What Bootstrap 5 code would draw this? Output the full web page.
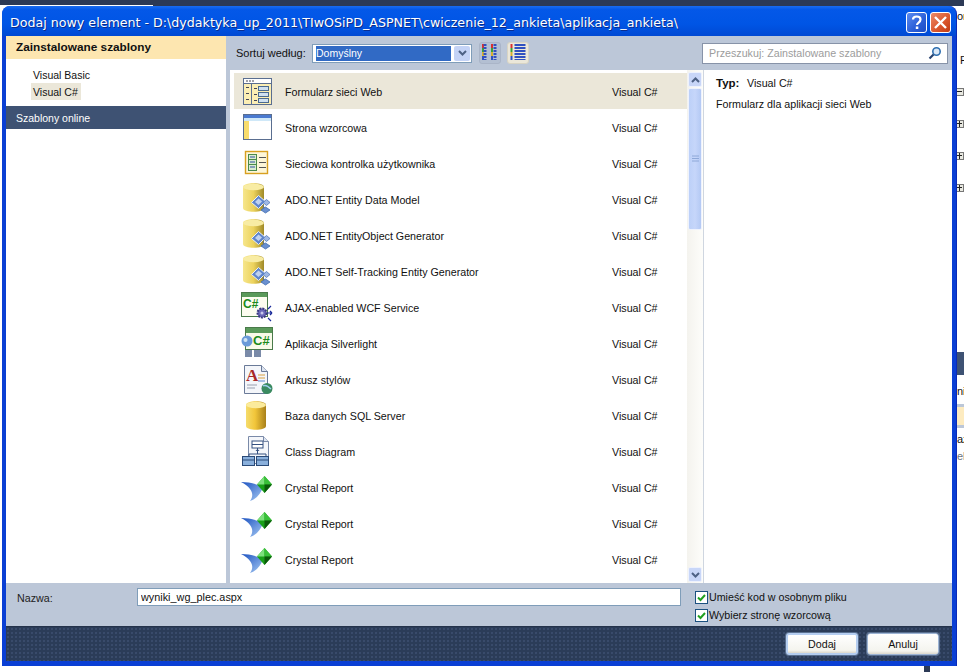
<!DOCTYPE html>
<html lang="pl">
<head>
<meta charset="UTF-8">
<title>Dodaj nowy element</title>
<link href="https://cdn.jsdelivr.net/npm/bootstrap@5.3.0/dist/css/bootstrap.min.css" rel="stylesheet">
<style>
html, body { height: 100%; }
body { width: 964px; height: 672px; overflow: hidden; background: #fff; position: relative; font: 10.7px/13px "Liberation Sans", Arial, sans-serif; color: #111; }
/* pulpit za oknem */
.top-strip { position: absolute; left: 0; top: 0; width: 964px; height: 6px; background: #2c3a56; }
.top-white { position: absolute; left: 0; top: 5px; width: 153px; height: 2px; background: #fff; }
.side-strip { position: absolute; left: 957px; top: 6px; width: 7px; height: 659px; background: #fff; overflow: hidden; white-space: nowrap; }
.side-txt { position: absolute; left: 3px; font-size: 11px; }
.side-txt.tight { left: 0; }
.side-head { position: absolute; left: 0; top: 346px; width: 7px; height: 23px; background: #3e5273; }
.side-band { position: absolute; left: 0; top: 398px; width: 7px; height: 24px; background: #fdebc0; border-top: 3px solid #bcc7d8; border-bottom: 3px solid #bcc7d8; }
.side-exp { position: absolute; left: 0; width: 7px; height: 8px; border: 1px solid #777; border-left: 0; background: linear-gradient(#222, #222) 0 2px / 5px 1px no-repeat, #e8e8e0; }
.side-exp.plus { background: linear-gradient(#222, #222) 0 2px / 5px 1px no-repeat, linear-gradient(#222, #222) 2px 0 / 1px 6px no-repeat, #e8e8e0; }
.bottom-dark { position: absolute; left: 924px; top: 665px; width: 6px; height: 7px; background: #2c3a56; }

/* okno */
.dlg { position: absolute; left: 2px; top: 6px; width: 955px; height: 660px; background: #0a3fd4; border-radius: 8px 8px 0 0; padding: 0 4px 4px; border-right: 1px solid #0a2ab8; display: flex; flex-direction: column; }
.dlg-title { height: 30px; margin: 0 -4px; padding: 3px 5px 0 8px; border-radius: 8px 8px 0 0; background: linear-gradient(#1a6cf0 0, #0458e8 12%, #0055e5 60%, #0049d3 100%); color: #fff; font: 12.65px/20px "DejaVu Sans", Verdana, sans-serif; display: flex; align-items: center; justify-content: space-between; text-shadow: 1px 1px 0 #0a2c8c; }
.title-text { white-space: nowrap; }
.cap-btn { width: 21px; height: 21px; border: 1px solid #fff; border-radius: 3px; display: block; margin-left: 3px; }
.cap-btn svg { display: block; }
.cap-help { background: linear-gradient(135deg, #5c8cf0, #2a5ed8 60%, #1c4cc4); }
.cap-close { background: linear-gradient(135deg, #ec8a68, #d9552c 60%, #bf3a14); }

.dlg-main { height: 547px; background: #bcc7d8; display: flex; }
.left-pane { width: 220px; background: #fff; flex: none; }
.left-head { height: 23px; line-height: 22px; background: #fde6b0; padding-left: 10px; font-weight: 700; font-size: 11.8px; }
.left-tree { padding: 7px 0 6px 25px; height: 47px; }
.tree-item { display: block; padding: 0 2px; height: 17px; line-height: 19px; width: 50px; white-space: nowrap; font-size: 10.5px; }
.tree-item.on { background: #ebe7d9; }
.left-online { height: 23px; line-height: 25px; background: #3e5273; color: #fff; padding-left: 10px; font-size: 10.5px; }

.mid-pane { flex: 1; display: flex; flex-direction: column; min-width: 0; }
.tool-row { height: 34px; display: flex; align-items: center; padding: 0 4px 0 10px; }
.sort-lbl { width: 76px; flex: none; font-size: 11px; }
.sort-select { width: 160px; height: 19px; background: #fff; border: 1px solid #7f9db9; padding: 1px 1px 1px 3px; display: flex; gap: 3px; color: #fff; }
.sort-val { flex: 1; background: #316ac5; line-height: 15px; font-size: 10.5px; }
.sort-arrow { width: 16px; background: #c4d3f6; border-radius: 2px; display: flex; align-items: center; justify-content: center; }
.view-btn { width: 22px; height: 22px; border-radius: 3px; margin-left: 6px; background: #b3bfd2; border: 1px solid #aab5c8; display: flex; align-items: center; justify-content: center; }
.view-btn.first { margin-left: 7px; }
.view-btn.on { background: #ebe7d9; border-color: #d8d4c4; }
.search-box { width: 246px; height: 21px; margin-left: auto; background: #fff; border: 1px solid #8793a8; border-radius: 0; display: flex; align-items: center; justify-content: space-between; color: #9c9c9c; padding: 0 5px 0 6px; }

.body-row { flex: 1; display: flex; min-height: 0; }
.items { width: 457px; margin-left: 4px; background: #fff; padding: 3px 0 0 4px; flex: none; overflow: hidden; border-radius: 0; }
.item-row { height: 36px; padding: 0; border: 0; border-radius: 0 !important; display: flex; align-items: center; background: transparent; color: #111; font-size: 10.7px; }
.item-row.active { background: #ebe7d9; color: #111; margin-top: 0; }
.item-row span { padding-top: 2px; }
.item-ico { width: 32px; height: 32px; margin-left: 7px; flex: none; }
.item-name { margin-left: 12px; width: 327px; flex: none; white-space: nowrap; }

.vscroll { width: 17px; background: linear-gradient(90deg, #f4f3ee, #fdfdfa); flex: none; padding: 2px 1px 1px; display: flex; flex-direction: column; border-right: 1px solid #cfd6e0; }
.sb-btn { height: 15px; flex: none; background: #c8d6f8; border: 1px solid #eef2fd; border-radius: 2px; display: flex; align-items: center; justify-content: center; }
.sb-thumb { height: 142px; margin-top: 1px; background: linear-gradient(90deg, #bcd0f8, #c6d6fa 50%, #b4c9f4); border: 1px solid #eef2fd; border-radius: 2px; display: flex; align-items: center; justify-content: center; }
.sb-space { flex: 1; }
.detail { flex: 1; background: #fff; padding: 6px 0 0 12px; }
.detail-type { display: flex; height: 17px; line-height: 14px; }
.detail-type b { width: 31px; font-size: 11.5px; }
.detail-desc { margin-top: 5px; }

.name-band { height: 43px; background: #bcc7d8; display: flex; padding: 5px 0 0 11px; }
.name-lbl { width: 120px; line-height: 20px; flex: none; color: #222; }
.name-input { width: 544px; height: 18px; flex: none; font: 10.85px/16px "Liberation Sans", Arial, sans-serif; color: #111; border: 1px solid #7f9db9; border-radius: 0; padding: 0 3px; }
.opts { margin-left: 14px; }
.opt { display: flex; align-items: center; height: 18px; margin: 0; padding: 0; min-height: 0; gap: 1px; }
.opt .form-check-input { width: 13px; height: 13px; margin: 0; float: none; border: 1px solid #1c5180; border-radius: 0; background-color: #fff; background-image: url("data:image/svg+xml,%3csvg xmlns='http://www.w3.org/2000/svg' viewBox='0 0 13 13'%3e%3cpath d='M3 6.500l2.500 2.500 4.500-5' fill='none' stroke='%2321a121' stroke-width='2'/%3e%3c/svg%3e"); background-size: 13px 13px; opacity: 1; }
.opt .form-check-label { opacity: 1; color: #111; font-size: 10.7px; line-height: 14px; }

.foot { height: 35px; display: flex; justify-content: flex-end; align-items: flex-start; gap: 9px; padding: 6px 13px 0 0; background-color: #2b3c58; background-image: radial-gradient(#3a4c6c 0.7px, transparent 0.8px); background-size: 4px 4px; border-top: 1px solid #24324b; }
.foot-btn { width: 72px; height: 22px; padding: 0; font: 10.7px/19px "Liberation Sans", Arial, sans-serif; color: #111; border: 1px solid #9db4d4; border-radius: 3px; background: linear-gradient(#fff, #f4f4ee 85%, #dcd8cc); box-shadow: 0 0 0 1px #5a7090; }
.foot-btn.def { border: 2px solid #b4cdf0; line-height: 18px; }
</style>
</head>
<body>

<svg width="0" height="0" style="position:absolute">
  <defs>
    <linearGradient id="gold" x1="0" x2="1" y1="0" y2="0"><stop offset="0" stop-color="#f5dc6c"/><stop offset=".45" stop-color="#f2c63a"/><stop offset="1" stop-color="#a8801a"/></linearGradient>
    <linearGradient id="goldpale" x1="0" x2="1" y1="0" y2="0"><stop offset="0" stop-color="#f6e68c"/><stop offset=".5" stop-color="#ecd25c"/><stop offset="1" stop-color="#a08a28"/></linearGradient>
    <linearGradient id="swoosh" x1="0" x2="1" y1="0" y2="1"><stop offset="0" stop-color="#1a50c0"/><stop offset="1" stop-color="#a8ccf4"/></linearGradient>
    <symbol id="i-form" viewBox="0 0 32 32">
      <rect x="2.500" y="3.500" width="28" height="26" fill="#fbeeb4" stroke="#5a6e90"/>
      <rect x="3" y="4" width="27" height="4" fill="#fff"/>
      <path d="M5 6h2M8 6h2M11 6h2" stroke="#445"/>
      <path d="M10.500 9v20M3 8.500h27" stroke="#5a6e90"/>
      <path d="M5 12.500h3M5 18.500h3M5 24.500h3M13 13.500h3M13 19.500h3M13 25.500h3" stroke="#445"/>
      <rect x="17.500" y="11.500" width="10" height="4" fill="#cfe0f0" stroke="#4a6a90"/>
      <rect x="17.500" y="17.500" width="10" height="4" fill="#cfe0f0" stroke="#4a6a90"/>
      <rect x="17.500" y="23.500" width="10" height="4" fill="#cfe0f0" stroke="#4a6a90"/>
    </symbol>
    <symbol id="i-master" viewBox="0 0 32 32">
      <rect x="2.500" y="3.500" width="28" height="25" fill="#fff" stroke="#5a6e90"/>
      <rect x="3" y="4" width="27" height="3" fill="#4a7ad0"/>
      <rect x="3" y="7" width="27" height="3" fill="#cfe8f8"/>
      <rect x="3" y="10" width="5" height="18" fill="#f8dc6c"/>
    </symbol>
    <symbol id="i-user" viewBox="0 0 32 32">
      <rect x="4.500" y="4.500" width="22" height="22" fill="#fdf6d8" stroke="#d8a020" stroke-width="1.400"/>
      <rect x="7.500" y="7.500" width="8" height="16" fill="#d8ecd0" stroke="#4a8a4a"/>
      <path d="M8 12.500h7M8 17.500h7" stroke="#4a8a4a"/>
      <path d="M9 10h5M9 15h5M9 20h5" stroke="#3050a0"/>
      <path d="M18 10.500h7M18 15.500h7M18 20.500h7" stroke="#555"/>
    </symbol>
    <symbol id="i-dbdiag" viewBox="0 0 32 32">
      <path d="M2 4c0-5 21-5 21 0v21c0 5-21 5-21 0z" fill="url(#goldpale)"/>
      <ellipse cx="12.500" cy="4" rx="10.500" ry="3.200" fill="#f8eca4"/>
      <path d="M10.500 19.500l7-7 7 6-7 7z" fill="#5f86cc" stroke="#e8eef8"/>
      <path d="M14 19l3.500-3.500 3.500 3-3.500 3.500z" fill="#c0d2f0"/>
      <path d="M22 22l1.500 4" stroke="#5a6e90"/>
      <path d="M22 19.500l3.500-3 3.500 3-3.500 3z" fill="#9fb8e4" stroke="#5078b8" stroke-width=".8"/>
      <path d="M20 27l4.500-3 4.500 3-4.500 3z" fill="#6a90d0" stroke="#3f6cb0" stroke-width=".8"/>
    </symbol>
    <symbol id="i-ajax" viewBox="0 0 32 32">
      <rect x="0.500" y="1.500" width="26" height="24" fill="#fdfdf0" stroke="#4a7a4a"/>
      <rect x="1" y="2" width="25" height="4" fill="#5a9a5a"/>
      <text x="2" y="17" font-family="Liberation Sans, sans-serif" font-size="12" font-weight="700" fill="#1a8a1a">C#</text>
      <circle cx="21" cy="22" r="4.500" fill="#6a68b8" stroke="#3a3a80" stroke-width="2" stroke-dasharray="2 1"/>
      <circle cx="21" cy="22" r="1.500" fill="#c8c8ec"/>
      <path d="M26 22h5M31 22l-2-2M31 22l-2 2M27 18l3-3M27 27l3 3" stroke="#1a2a9a" stroke-width="1.200" fill="none"/>
    </symbol>
    <symbol id="i-silver" viewBox="0 0 32 32">
      <rect x="4.500" y="0.500" width="27" height="22" fill="#f8fae8" stroke="#4a7a4a"/>
      <rect x="5" y="1" width="26" height="5" fill="#5a9a5a"/>
      <rect x="4" y="23" width="7" height="7" fill="#7a8aa8"/><rect x="13" y="23" width="7" height="7" fill="#7a8aa8"/>
      <text x="12" y="18" font-family="Liberation Sans, sans-serif" font-size="13" font-weight="700" fill="#1a8a1a">C#</text>
      <circle cx="6" cy="14" r="5.500" fill="#6a9ad8"/>
      <circle cx="4.500" cy="13" r="2" fill="#d0e4f4"/>
    </symbol>
    <symbol id="i-css" viewBox="0 0 32 32">
      <path d="M3.500 2.500h17l6 6v22h-23z" fill="#f4f6fa" stroke="#6a7a98"/>
      <path d="M20.500 2.500v6h6" fill="#dde4f0" stroke="#6a7a98"/>
      <text x="5" y="18" font-family="Liberation Serif, serif" font-size="17" font-weight="700" fill="#a82828">A</text>
      <path d="M17 12h7M17 15h7" stroke="#d8a040"/><path d="M17 18h7" stroke="#5a8ad0"/><path d="M6 22h10M6 25h8" stroke="#98a0b0"/>
      <circle cx="26" cy="25.500" r="5.500" fill="#3a8a60"/><path d="M22 23c3-2 6 1 8 3" stroke="#a0d0f0" fill="none" stroke-width="1.500"/>
    </symbol>
    <symbol id="i-db" viewBox="0 0 32 32">
      <path d="M5 6c0-5 20-5 20 0v21c0 5-20 5-20 0z" fill="url(#gold)"/>
      <ellipse cx="15" cy="6" rx="10" ry="3.200" fill="#fbeb9c"/>
    </symbol>
    <symbol id="i-class" viewBox="0 0 32 32">
      <path d="M7.500 1.500h15l5 5v22h-20z" fill="#f4f6fa" stroke="#7a8aa8"/>
      <path d="M22.500 1.500v5h5" fill="#dde4f0" stroke="#7a8aa8"/>
      <rect x="11" y="6" width="11" height="7" fill="#fff" stroke="#345080"/><path d="M11 9.500h11" stroke="#345080"/>
      <path d="M16.500 13v6M8 21v-2h17v2" stroke="#345080" fill="none"/>
      <path d="M14.500 16l2-2 2 2z" fill="#345080"/>
      <rect x="1.500" y="21.500" width="12" height="9" fill="#8ab0dc" stroke="#2a4a78"/><path d="M2 25h11" stroke="#2a4a78"/>
      <rect x="15.500" y="21.500" width="12" height="9" fill="#8ab0dc" stroke="#2a4a78"/><path d="M16 25h11" stroke="#2a4a78"/>
    </symbol>
    <symbol id="i-crystal" viewBox="0 0 32 32">
      <path d="M0 11c8 0 16 2 22 5-2 7-7 12-13 14 3-4 3-8 0-12-2-3-5-5-9-7z" fill="url(#swoosh)"/>
      <path d="M23.500 5l7.500 8.500-7.500 8.500-7.500-8.500z" fill="#18a018"/>
      <path d="M23.500 5l-7.500 8.500h7.500z" fill="#7ce07c"/>
      <path d="M23.500 5l7.500 8.500h-7.500z" fill="#38c038"/>
      <path d="M23.500 22l7.500-8.500h-7.500z" fill="#0a5a0a"/>
    </symbol>
    <symbol id="i-chev-d" viewBox="0 0 9 6"><path d="M1 1l3.500 3.500L8 1" fill="none" stroke="#4d6185" stroke-width="2"/></symbol>
    <symbol id="i-chev-u" viewBox="0 0 9 6"><path d="M1 5l3.500-3.500L8 5" fill="none" stroke="#4d6185" stroke-width="2"/></symbol>
    <symbol id="i-dots" viewBox="0 0 2 18">
      <path d="M1 0v4" stroke="#d83030" stroke-width="2"/><path d="M1 4v4" stroke="#3aa03a" stroke-width="2"/><path d="M1 8v4" stroke="#d8b030" stroke-width="2"/><path d="M1 12v4" stroke="#3050c0" stroke-width="2"/>
    </symbol>
  </defs>
</svg>

<div class="top-strip"></div>
<div class="top-white"></div>
<div class="side-strip">
  <span class="side-txt tight" style="top:4px">or</span>
  <span class="side-txt" style="top:48px">F</span>
  <div class="side-exp" style="top:82px"></div>
  <div class="side-exp plus" style="top:114px"></div>
  <div class="side-exp plus" style="top:146px"></div>
  <div class="side-exp plus" style="top:178px"></div>
  <div class="side-head"></div>
  <span class="side-txt tight" style="top:379px">ni</span>
  <div class="side-band"></div>
  <span class="side-txt tight" style="top:427px">az</span>
  <span class="side-txt tight text-secondary" style="top:444px">el</span>
</div>
<div class="bottom-dark"></div>

<div class="dlg">
  <div class="dlg-title">
    <span class="title-text">Dodaj nowy element - D:\dydaktyka_up_2011\TIwOSiPD_ASPNET\cwiczenie_12_ankieta\aplikacja_ankieta\</span>
    <span class="d-flex">
      <span class="cap-btn cap-help">
        <svg width="19" height="19" viewBox="0 0 19 19"><path d="M6 6.500c0-4 7.500-4 7.500 0 0 3-3.500 3-3.500 5.500" fill="none" stroke="#fff" stroke-width="2.200"/><rect x="8.800" y="13.500" width="2.500" height="2.500" fill="#fff"/></svg>
      </span>
      <span class="cap-btn cap-close">
        <svg width="19" height="19" viewBox="0 0 19 19"><path d="M4 4l11 11M15 4L4 15" stroke="#fff" stroke-width="2.400"/></svg>
      </span>
    </span>
  </div>

  <div class="dlg-main">
    <div class="left-pane">
      <div class="left-head">Zainstalowane szablony</div>
      <div class="left-tree">
        <span class="tree-item">Visual Basic</span>
        <span class="tree-item on">Visual C#</span>
      </div>
      <div class="left-online">Szablony online</div>
    </div>

    <div class="mid-pane">
      <div class="tool-row">
        <span class="sort-lbl">Sortuj według:</span>
        <div class="sort-select">
          <span class="sort-val">Domyślny</span>
          <span class="sort-arrow"><svg width="9" height="6"><use href="#i-chev-d"/></svg></span>
        </div>
        <span class="view-btn first">
          <svg width="17" height="18" viewBox="0 0 17 18">
            <use href="#i-dots" x="0" width="2" height="18"/><path d="M3 0v16" stroke="#3050c0" stroke-width="3" stroke-dasharray="2 1"/>
            <use href="#i-dots" x="9" width="2" height="18"/><path d="M13 0v16" stroke="#3050c0" stroke-width="3" stroke-dasharray="2 1"/>
          </svg>
        </span>
        <span class="view-btn on">
          <svg width="17" height="18" viewBox="0 0 17 18">
            <use href="#i-dots" x="0" width="3" height="18"/><path d="M10 0v16" stroke="#3050c0" stroke-width="11" stroke-dasharray="2 1"/>
          </svg>
        </span>
        <div class="search-box">
          <span>Przeszukuj: Zainstalowane szablony</span>
          <svg width="14" height="14" viewBox="0 0 14 14"><circle cx="8.500" cy="5.500" r="3.700" fill="#dbe8f6" stroke="#2f6fb0" stroke-width="1.600"/><path d="M5.500 8.500L1.500 12.500" stroke="#25406e" stroke-width="2.200"/></svg>
        </div>
      </div>

      <div class="body-row">
        <div class="items list-group">
          <div class="list-group-item item-row active"><svg class="item-ico"><use href="#i-form"/></svg><span class="item-name">Formularz sieci Web</span><span>Visual C#</span></div>
          <div class="list-group-item item-row"><svg class="item-ico"><use href="#i-master"/></svg><span class="item-name">Strona wzorcowa</span><span>Visual C#</span></div>
          <div class="list-group-item item-row"><svg class="item-ico"><use href="#i-user"/></svg><span class="item-name">Sieciowa kontrolka użytkownika</span><span>Visual C#</span></div>
          <div class="list-group-item item-row"><svg class="item-ico"><use href="#i-dbdiag"/></svg><span class="item-name">ADO.NET Entity Data Model</span><span>Visual C#</span></div>
          <div class="list-group-item item-row"><svg class="item-ico"><use href="#i-dbdiag"/></svg><span class="item-name">ADO.NET EntityObject Generator</span><span>Visual C#</span></div>
          <div class="list-group-item item-row"><svg class="item-ico"><use href="#i-dbdiag"/></svg><span class="item-name">ADO.NET Self-Tracking Entity Generator</span><span>Visual C#</span></div>
          <div class="list-group-item item-row"><svg class="item-ico"><use href="#i-ajax"/></svg><span class="item-name">AJAX-enabled WCF Service</span><span>Visual C#</span></div>
          <div class="list-group-item item-row"><svg class="item-ico"><use href="#i-silver"/></svg><span class="item-name">Aplikacja Silverlight</span><span>Visual C#</span></div>
          <div class="list-group-item item-row"><svg class="item-ico"><use href="#i-css"/></svg><span class="item-name">Arkusz stylów</span><span>Visual C#</span></div>
          <div class="list-group-item item-row"><svg class="item-ico"><use href="#i-db"/></svg><span class="item-name">Baza danych SQL Server</span><span>Visual C#</span></div>
          <div class="list-group-item item-row"><svg class="item-ico"><use href="#i-class"/></svg><span class="item-name">Class Diagram</span><span>Visual C#</span></div>
          <div class="list-group-item item-row"><svg class="item-ico"><use href="#i-crystal"/></svg><span class="item-name">Crystal Report</span><span>Visual C#</span></div>
          <div class="list-group-item item-row"><svg class="item-ico"><use href="#i-crystal"/></svg><span class="item-name">Crystal Report</span><span>Visual C#</span></div>
          <div class="list-group-item item-row"><svg class="item-ico"><use href="#i-crystal"/></svg><span class="item-name">Crystal Report</span><span>Visual C#</span></div>
        </div>
        <div class="vscroll">
          <span class="sb-btn"><svg width="9" height="6"><use href="#i-chev-u"/></svg></span>
          <span class="sb-thumb"><svg width="7" height="8"><path d="M0 1h7M0 3.500h7M0 6h7" stroke="#8ea8d8"/></svg></span>
          <span class="sb-space"></span>
          <span class="sb-btn"><svg width="9" height="6"><use href="#i-chev-d"/></svg></span>
        </div>
        <div class="detail">
          <div class="detail-type"><b>Typ:</b><span>Visual C#</span></div>
          <div class="detail-desc">Formularz dla aplikacji sieci Web</div>
        </div>
      </div>
    </div>
  </div>

  <div class="name-band">
    <label class="name-lbl" for="nazwa">Nazwa:</label>
    <input id="nazwa" class="form-control name-input" type="text" value="wyniki_wg_plec.aspx">
    <div class="opts">
      <div class="form-check opt"><input class="form-check-input" type="checkbox" id="c1" checked><label class="form-check-label" for="c1">Umieść kod w osobnym pliku</label></div>
      <div class="form-check opt"><input class="form-check-input" type="checkbox" id="c2" checked><label class="form-check-label" for="c2">Wybierz stronę wzorcową</label></div>
    </div>
  </div>

  <div class="foot">
    <button type="button" class="btn foot-btn def">Dodaj</button>
    <button type="button" class="btn foot-btn">Anuluj</button>
  </div>
</div>

</body>
</html>
